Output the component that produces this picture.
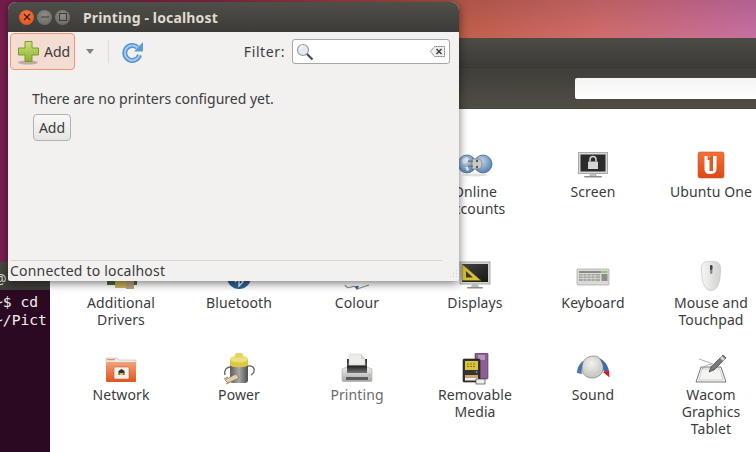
<script>
  // Ubuntu desktop: system settings and terminal behind the Printing window
</script>

<div class="desktop">
  <div class="terminal">
    <div class="term-title">@</div>
    <div class="term-body">
      <div>~$ cd</div>
      <div>~/Pict</div>
    </div>
  </div>

  <div class="settings">
    <div class="set-title"></div>
    <div class="set-toolbar">
      <div class="set-search"></div>
    </div>
    <div class="set-body">
      <div class="section first">
        <div class="item col4">
          <svg width="36" height="32" viewBox="0 0 36 32">
            <defs>
              <radialGradient id="globe" cx="0.4" cy="0.35" r="0.8"><stop offset="0" stop-color="#c5d8ee" /><stop offset="1" stop-color="#3f6ea8" /></radialGradient>
            </defs>
            <circle cx="10" cy="14" r="9" fill="url(#globe)" stroke="#38587f" stroke-width=".7" />
            <circle cx="26" cy="14" r="9" fill="url(#globe)" stroke="#38587f" stroke-width=".7" />
            <path d="M5 10l4-3 3 2-2 4-4 1zM8 17l3 0 1 3-2 1z" fill="#dfe6ee" />
            <path d="M15 9h6c3 0 4 2 4 5s-1 5-4 5h-6z" fill="#c9c9c6" stroke="#666" stroke-width=".6" />
            <rect x="11" y="10.5" width="5" height="1.6" fill="#777" />
            <rect x="11" y="15.5" width="5" height="1.6" fill="#777" />
            <circle cx="20" cy="11" r="1.2" fill="#555" /><circle cx="20" cy="17" r="1.2" fill="#555" />
            <ellipse cx="18" cy="25" rx="13" ry="1.5" fill="#000" opacity=".12" />
          </svg>
          <span>Online<br />Accounts</span>
        </div>
        <div class="item">
          <svg width="36" height="32" viewBox="0 0 36 32">
            <rect x="3.500" y="2.500" width="29" height="21" fill="#d8d8d6" stroke="#a9a9a7" />
            <rect x="5.500" y="4.500" width="25" height="17" fill="#2b2b2b" />
            <path d="M15 11.500v-2a3 3 0 0 1 6 0v2" fill="none" stroke="#d6d6d6" stroke-width="1.500" />
            <rect x="13" y="11.500" width="10" height="7.500" rx=".6" fill="#d6d6d6" />
            <path d="M15 24h6l1 2h-8z" fill="#bdbdbb" />
            <rect x="9" y="26" width="18" height="1.600" rx=".8" fill="#8d8d8b" />
          </svg>
          <span>Screen</span>
        </div>
        <div class="item">
          <svg width="36" height="32" viewBox="0 0 36 32">
            <defs>
              <linearGradient id="uone" x1="0" y1="0" x2="0" y2="1"><stop offset="0" stop-color="#f27039" /><stop offset="1" stop-color="#dd4814" /></linearGradient>
            </defs>
            <rect x="5" y="2" width="26" height="26" rx="2" fill="url(#uone)" stroke="#c9572b" stroke-width=".6" />
            <path d="M11.500 6h3v4h2V6h7v13a5 5 0 0 1-5 5h-2.500a4.500 4.500 0 0 1-4.500-4.500z" fill="#fff" />
            <path d="M17.500 6h2.500v15h-3.500V9.500h-1.500z" fill="#e8561f" />
          </svg>
          <span>Ubuntu One</span>
        </div>
      </div>

      <div class="section second">
        <div class="item">
          <svg width="36" height="32" viewBox="0 0 36 32">
            <rect x="4" y="12" width="30" height="12" fill="#4d6b34" />
            <rect x="12" y="20" width="14" height="7" fill="#c9b05c" />
            <rect x="23" y="18" width="8" height="10" fill="#b8a07c" />
          </svg>
          <span>Additional<br />Drivers</span>
        </div>
        <div class="item">
          <svg width="36" height="32" viewBox="0 0 36 32">
            <circle cx="18" cy="16" r="12" fill="#2e6496" />
            <path d="M14 21l8-8-4-4v16l4-4-8-8" fill="none" stroke="#fff" stroke-width="1.300" />
          </svg>
          <span>Bluetooth</span>
        </div>
        <div class="item">
          <svg width="36" height="32" viewBox="0 0 36 32">
            <path d="M6 24q2 4 6 2t6 2q3-1 6-2t6-2" fill="none" stroke="#8e8e8c" stroke-width="1.300" />
            <path d="M16 25h4l-2 4z" fill="#2e6496" />
          </svg>
          <span>Colour</span>
        </div>
        <div class="item">
          <svg width="36" height="32" viewBox="0 0 36 32">
            <defs>
              <linearGradient id="dsp" x1="0" y1="0" x2="1" y2="1"><stop offset="0" stop-color="#444" /><stop offset="1" stop-color="#161616" /></linearGradient>
            </defs>
            <rect x="3" y="1" width="30" height="22" fill="#d4d4d2" stroke="#a9a9a7" />
            <rect x="5" y="3" width="26" height="18" fill="url(#dsp)" />
            <path d="M5 3l19 16.500H5z" fill="#d9c13a" stroke="#6e5f14" stroke-width=".6" />
            <path d="M9 10l7 6.500H9z" fill="#3a3a32" />
            <path d="M15 23h6l1 3h-8z" fill="#bdbdbb" />
            <rect x="10" y="26" width="16" height="1.600" rx=".8" fill="#8d8d8b" />
          </svg>
          <span>Displays</span>
        </div>
        <div class="item">
          <svg width="36" height="32" viewBox="0 0 36 32">
            <rect x="2" y="8" width="32" height="16" rx="1" fill="#d9d9d6" stroke="#a3a3a0" stroke-width=".7" />
            <rect x="4" y="10" width="22" height="2" fill="#8a8a88" />
            <rect x="4" y="13" width="21" height="7" fill="#a5a5a2" />
            <path d="M4 15h21M4 17.500h21M8 13v7M12 13v7M16 13v7M20 13v7" stroke="#e8e8e6" stroke-width=".6" />
            <rect x="26.500" y="10" width="6" height="2" fill="#8fc463" />
            <rect x="26.500" y="13" width="6" height="7" fill="#8c8c8a" />
          </svg>
          <span>Keyboard</span>
        </div>
        <div class="item">
          <svg width="36" height="32" viewBox="0 0 36 32">
            <defs>
              <linearGradient id="mouse" x1="0" y1="0" x2="1" y2="0"><stop offset="0" stop-color="#f6f6f5" /><stop offset="1" stop-color="#d2d2cf" /></linearGradient>
            </defs>
            <path d="M18 0.500c7 0 9.500 1.500 9.500 7 0 10-1.500 22-9.500 22S8.500 17.500 8.500 7.500c0-5.500 2.500-7 9.500-7z" fill="url(#mouse)" stroke="#c4c4c1" stroke-width=".7" />
            <rect x="17" y="4" width="2.400" height="9" rx="1.200" fill="#8a8a88" />
            <rect x="17" y="4" width="2.400" height="5" rx="1.200" fill="#444" />
          </svg>
          <span>Mouse and<br />Touchpad</span>
        </div>
        <div class="item">
          <svg width="36" height="32" viewBox="0 0 36 32">
            <defs>
              <linearGradient id="folder" x1="0" y1="0" x2="0" y2="1"><stop offset="0" stop-color="#f3a27a" /><stop offset="1" stop-color="#e0561c" /></linearGradient>
            </defs>
            <path d="M3 7V5h11l2 2h17v3H3z" fill="#eeece8" stroke="#bbb" stroke-width=".6" />
            <rect x="4" y="6" width="8" height="1.200" fill="#f08a5c" />
            <rect x="3" y="9" width="30" height="20" rx="1" fill="url(#folder)" />
            <rect x="11" y="14" width="15" height="12" rx="1" fill="#f2efea" stroke="#a9553a" stroke-width=".5" />
            <path d="M15.500 22v-4l3-2 3 2v4z" fill="#333" />
            <rect x="16.500" y="20" width="4" height="2" fill="#d8c23c" />
          </svg>
          <span>Network</span>
        </div>
        <div class="item">
          <svg width="36" height="32" viewBox="0 0 36 32">
            <defs>
              <linearGradient id="batt" x1="0" y1="0" x2="1" y2="0"><stop offset="0" stop-color="#5c5c5a" /><stop offset=".5" stop-color="#a8a8a6" /><stop offset="1" stop-color="#4f4f4d" /></linearGradient>
            </defs>
            <path d="M10 14c-5 0-7 3-6 8M27 13c7-1 8 6 3 9" fill="none" stroke="#6a6a68" stroke-width="1.400" />
            <rect x="9" y="8" width="18" height="22" rx="3" fill="url(#batt)" />
            <path d="M9 6h18v6c0 3-18 3-18 0z" fill="#dcc93f" />
            <ellipse cx="18" cy="6" rx="9" ry="3.500" fill="#ece07a" />
            <rect x="14" y="0" width="8" height="5" rx="1.500" fill="#e4d664" />
            <path d="M4 27l11-6 3 4-11 5z" fill="#dcd0b4" stroke="#7d6a48" stroke-width=".6" />
            <path d="M3 26l4-2M5 31l4-2" stroke="#b58b57" stroke-width="1.200" />
          </svg>
          <span>Power</span>
        </div>
        <div class="item dim">
          <svg width="36" height="32" viewBox="0 0 36 32">
            <defs>
              <linearGradient id="prn" x1="0" y1="0" x2="0" y2="1"><stop offset="0" stop-color="#efefed" /><stop offset="1" stop-color="#a8a8a6" /></linearGradient>
              <linearGradient id="prnd" x1="0" y1="0" x2="0" y2="1"><stop offset="0" stop-color="#222" /><stop offset="1" stop-color="#777" /></linearGradient>
            </defs>
            <rect x="8" y="6" width="20" height="12" fill="url(#prnd)" />
            <path d="M10 1h12l4 5v6H10z" fill="#ecece9" stroke="#cfcfcc" stroke-width=".5" />
            <path d="M22 1v5h4z" fill="#cfcfcc" />
            <path d="M3 16l5-2h20l5 2v11a1.500 1.500 0 0 1-1.500 1.500h-27A1.500 1.500 0 0 1 3 27z" fill="url(#prn)" stroke="#9a9a98" stroke-width=".5" />
            <rect x="8" y="13" width="20" height="7" fill="url(#prnd)" />
            <rect x="7" y="24" width="22" height="3" fill="#5b5b59" />
            <rect x="29.500" y="21" width="2" height="1.500" fill="#9ec56a" />
          </svg>
          <span>Printing</span>
        </div>
        <div class="item">
          <svg width="36" height="32" viewBox="0 0 36 32">
            <rect x="18" y="0" width="13" height="26" rx="1" fill="#8d5f93" stroke="#55325b" stroke-width=".6" />
            <rect x="21" y="2" width="7" height="5" fill="#b893bd" />
            <rect x="6" y="6" width="17" height="23" rx="1" fill="#333" stroke="#1d1d1d" stroke-width=".6" />
            <rect x="8" y="8" width="13" height="9" fill="#dcc53e" />
            <path d="M10 11h9M10 13.500h9" stroke="#6b5d18" stroke-width=".8" stroke-dasharray="2 1" />
            <rect x="8" y="22" width="13" height="3" fill="#cfa36e" />
            <rect x="8" y="25" width="13" height="2.500" fill="#f0f0ee" />
            <rect x="19" y="26" width="9" height="5" fill="#eee" stroke="#444" stroke-width=".7" />
            <circle cx="19.500" cy="19" r="1" fill="#888" />
          </svg>
          <span>Removable<br />Media</span>
        </div>
        <div class="item">
          <svg width="36" height="32" viewBox="0 0 36 32">
            <defs>
              <radialGradient id="knob" cx="0.45" cy="0.35" r="0.75"><stop offset="0" stop-color="#f1f1ee" /><stop offset="1" stop-color="#bcbdb6" /></radialGradient>
            </defs>
            <path d="M2 20C2 15 4 11 8 8l2 3c-3 2-4 6-3 10z" fill="#4b74ad" />
            <path d="M24 5c5 2 9 7 10 13l-5 1c-1-5-4-8-8-10z" fill="#3d6cae" />
            <path d="M28 19l6-1.500 .5 7z" fill="#cf1f24" />
            <path d="M7 15c0-8 5-12 12-12 3 0 5 1 6 3 2 3 4 7 3 11-1 5-6 8-11 8-6 0-10-4-10-10z" fill="url(#knob)" stroke="#6a6b64" stroke-width=".6" />
          </svg>
          <span>Sound</span>
        </div>
        <div class="item">
          <svg width="36" height="32" viewBox="0 0 36 32">
            <path d="M8 14h20l5 15H3z" fill="#f4f4f2" stroke="#5b5b59" stroke-width=".8" />
            <path d="M9 16h18l3 11H6z" fill="none" stroke="#bcbcba" stroke-width=".6" />
            <path d="M6 6l14 5M9 16q6-6 10-4" fill="none" stroke="#8a8a88" stroke-width=".7" />
            <path d="M30 2l3 3-12 12-5 2 2-5z" fill="#7a7a78" stroke="#2f2f2f" stroke-width=".6" />
            <path d="M29 3l3 3-2 2-3-3z" fill="#d8d8d6" />
          </svg>
          <span>Wacom<br />Graphics<br />Tablet</span>
        </div>
      </div>
    </div>
  </div>

  <div class="printing">
    <div class="titlebar">
      <div class="controls">
        <span class="ctl close">
          <svg width="8" height="8" viewBox="0 0 8 8"><path d="M1 1l6 6M7 1l-6 6" stroke="#3a1a0c" stroke-width="1.300" /></svg>
        </span>
        <span class="ctl">
          <svg width="8" height="8" viewBox="0 0 8 8"><path d="M0 4h8" stroke="#3d3c38" stroke-width="1" /></svg>
        </span>
        <span class="ctl">
          <svg width="8" height="8" viewBox="0 0 8 8"><rect x=".5" y=".5" width="7" height="7" fill="none" stroke="#3d3c38" /></svg>
        </span>
      </div>
      <span class="wintitle">Printing - localhost</span>
    </div>

    <div class="toolbar">
      <div class="add-tool">
        <svg width="24" height="26" viewBox="0 0 24 26">
          <defs>
            <linearGradient id="plus" x1="0" y1="0" x2="0" y2="1"><stop offset="0" stop-color="#cfe27c" /><stop offset="1" stop-color="#8ab02c" /></linearGradient>
          </defs>
          <ellipse cx="11" cy="23.500" rx="10" ry="2" fill="#000" opacity=".22" />
          <path d="M8 2.500h7v6.500h6.500v7H15v6.500H8V16H1.500V9H8z" fill="url(#plus)" stroke="#7a9a2c" />
        </svg>
        <span>Add</span>
      </div>
      <svg class="arrow" width="8" height="5" viewBox="0 0 8 5"><path d="M0 0h8L4 5z" fill="#82807a" /></svg>
      <div class="tool-sep"></div>
      <svg class="reload" width="22" height="22" viewBox="0 0 22 22">
        <path d="M15.500 6.500A7.500 7.500 0 1 0 17.500 14" fill="none" stroke="#5593d2" stroke-width="5" />
        <path d="M15.500 6.500A7.500 7.500 0 1 0 17.500 14" fill="none" stroke="#a6c8ec" stroke-width="2" />
        <path d="M12 10.500L21 1v9.500z" fill="#5f9ad6" />
      </svg>
      <div class="spacer"></div>
      <span class="filter-label">Filter:</span>
      <div class="filter">
        <svg width="18" height="18" viewBox="0 0 18 18">
          <circle cx="7" cy="7" r="5.500" fill="#e3ecf3" stroke="#9a9a98" stroke-width="1.200" />
          <path d="M4 6a3 3 0 0 1 3-3" fill="none" stroke="#fff" stroke-width="1.200" />
          <path d="M11 11l5.500 5.500" stroke="#4c4c4a" stroke-width="2.200" />
        </svg>
        <svg width="15" height="11" viewBox="0 0 15 11">
          <path d="M4.500.5h10v10h-10L.5 5.500z" fill="#eee" stroke="#6b6b69" stroke-dasharray="1 .6" />
          <path d="M6.500 3l5 5M11.500 3l-5 5" stroke="#444" stroke-width="1.600" />
        </svg>
      </div>
    </div>

    <div class="content">
      <p>There are no printers configured yet.</p>
      <button class="add-btn">Add</button>
    </div>

    <div class="statusbar">
      <div class="status-line"></div>
      <span>Connected to localhost</span>
      <svg class="grip" width="12" height="12" viewBox="0 0 12 12">
        <path d="M10 2h1v1h-1zM7 5h1v1H7zM10 5h1v1h-1zM4 8h1v1H4zM7 8h1v1H7zM10 8h1v1h-1z" fill="#cfcdc8" />
      </svg>
    </div>
  </div>
</div>

<style>
  :global(body) {
    margin: 0;
    overflow: hidden;
  }

  .desktop {
    position: relative;
    width: 756px;
    height: 452px;
    overflow: hidden;
    font-family: "Noto Sans", "Open Sans", sans-serif;
    font-size: 14px;
    color: #3c3c3c;
    background:
      linear-gradient(rgba(60, 10, 40, 0.14), rgba(60, 10, 40, 0) 36px),
      linear-gradient(90deg, #7c1f52 0, #8a2c49 200px, #b04a42 350px, #c1604c 470px, #d06c6c 600px, #c66fa2 756px);
  }

  .terminal {
    position: absolute;
    left: -6px;
    top: 262px;
    width: 56px;
    height: 190px;
    display: flex;
    flex-direction: column;
    overflow: hidden;
  }

  .term-title {
    height: 28px;
    flex: none;
    box-sizing: border-box;
    padding-top: 7px;
    background: linear-gradient(#4a4944, #3c3b37);
    color: #d8d6cf;
    font-size: 14px;
  }

  .term-body {
    flex: 1;
    padding-top: 3px;
    background: #2c0922;
    color: #eeeeec;
    font-family: "DejaVu Sans Mono", monospace;
    font-size: 14.67px;
    line-height: 18px;
    white-space: nowrap;
  }

  .settings {
    position: absolute;
    left: 50px;
    top: 38px;
    width: 720px;
    height: 414px;
    display: flex;
    flex-direction: column;
  }

  .set-title {
    height: 29px;
    background: linear-gradient(#4c4b46, #3c3b37);
  }

  .set-toolbar {
    height: 42px;
    box-sizing: border-box;
    padding: 10px 0 0 525px;
    border-top: 1px solid #38372f;
    background: linear-gradient(#3f3e38, #504d45);
    border-bottom: 1px solid #47453e;
  }

  .set-search {
    width: 190px;
    height: 21px;
    border-radius: 2px;
    background: linear-gradient(#f4f4f3, #ffffff);
  }

  .set-body {
    flex: 1;
    background: #fff;
    padding: 41px 0 0 12px;
  }

  .section {
    display: grid;
    grid-template-columns: repeat(6, 118px);
    row-gap: 23px;
  }

  .section.second {
    margin-top: 42px;
  }

  .col4 {
    grid-column-start: 4;
  }

  .item {
    display: flex;
    flex-direction: column;
    align-items: center;
    gap: 1px;
    min-height: 69px;
    text-align: center;
    line-height: 17px;
    letter-spacing: 0.1px;
  }

  .item svg {
    display: block;
  }

  .item.dim {
    color: #6b6b6b;
  }

  .printing {
    position: absolute;
    left: 8px;
    top: 2px;
    width: 451px;
    height: 279px;
    display: flex;
    flex-direction: column;
    border-radius: 8px 8px 2px 2px;
    background: #f2f1f0;
    box-shadow: 0 2px 10px rgba(0, 0, 0, 0.55);
    overflow: hidden;
  }

  .titlebar {
    height: 30px;
    flex: none;
    display: flex;
    align-items: center;
    padding-left: 11px;
    background: linear-gradient(#4f4e49, #3c3b37);
  }

  .controls {
    display: flex;
    gap: 3px;
    margin-right: 13px;
  }

  .ctl {
    width: 15px;
    height: 15px;
    border-radius: 50%;
    display: flex;
    align-items: center;
    justify-content: center;
    background: radial-gradient(circle at 50% 35%, #8e8d87, #63625c);
    border: 0;
  }

  .ctl.close {
    background: radial-gradient(circle at 50% 35%, #f47a3e, #dd4a18);
  }

  .wintitle {
    color: #dfdbd2;
    font-weight: 700;
    font-size: 14px;
    letter-spacing: 0.15px;
  }

  .toolbar {
    height: 39px;
    flex: none;
    display: flex;
    align-items: center;
    padding: 0 9px 0 2px;
  }

  .add-tool {
    width: 65px;
    height: 37px;
    box-sizing: border-box;
    display: flex;
    align-items: center;
    gap: 3px;
    padding-left: 6px;
    border: 1px solid #f0976c;
    border-radius: 4px;
    background: #f3ddd3;
  }

  .arrow {
    margin-left: 11px;
  }

  .tool-sep {
    width: 1px;
    height: 23px;
    margin-left: 14px;
    background: #dcdad5;
  }

  .reload {
    margin-left: 13px;
  }

  .spacer {
    flex: 1;
  }

  .filter-label {
    margin-right: 7px;
    letter-spacing: 0.6px;
  }

  .filter {
    width: 158px;
    height: 25px;
    box-sizing: border-box;
    display: flex;
    align-items: center;
    justify-content: space-between;
    padding: 0 4px 0 3px;
    border: 1px solid #a9a7a1;
    border-radius: 3px;
    background: #fff;
  }

  .content {
    flex: 1;
    padding: 18px 0 0 24px;
  }

  .content p {
    margin: 0 0 5px;
    line-height: 20px;
  }

  .add-btn {
    display: block;
    width: 38px;
    height: 27px;
    margin-left: 1px;
    padding: 0;
    font: inherit;
    color: inherit;
    border: 1px solid #b3b1ab;
    border-radius: 4px;
    background: linear-gradient(#f8f8f7, #e6e5e2);
  }

  .statusbar {
    height: 21px;
    flex: none;
    position: relative;
    padding-left: 2px;
    line-height: 19px;
    letter-spacing: 0.2px;
  }

  .status-line {
    height: 1px;
    margin-right: 17px;
    background: #d8d6d1;
  }

  .grip {
    position: absolute;
    right: 1px;
    bottom: 1px;
  }
</style>
